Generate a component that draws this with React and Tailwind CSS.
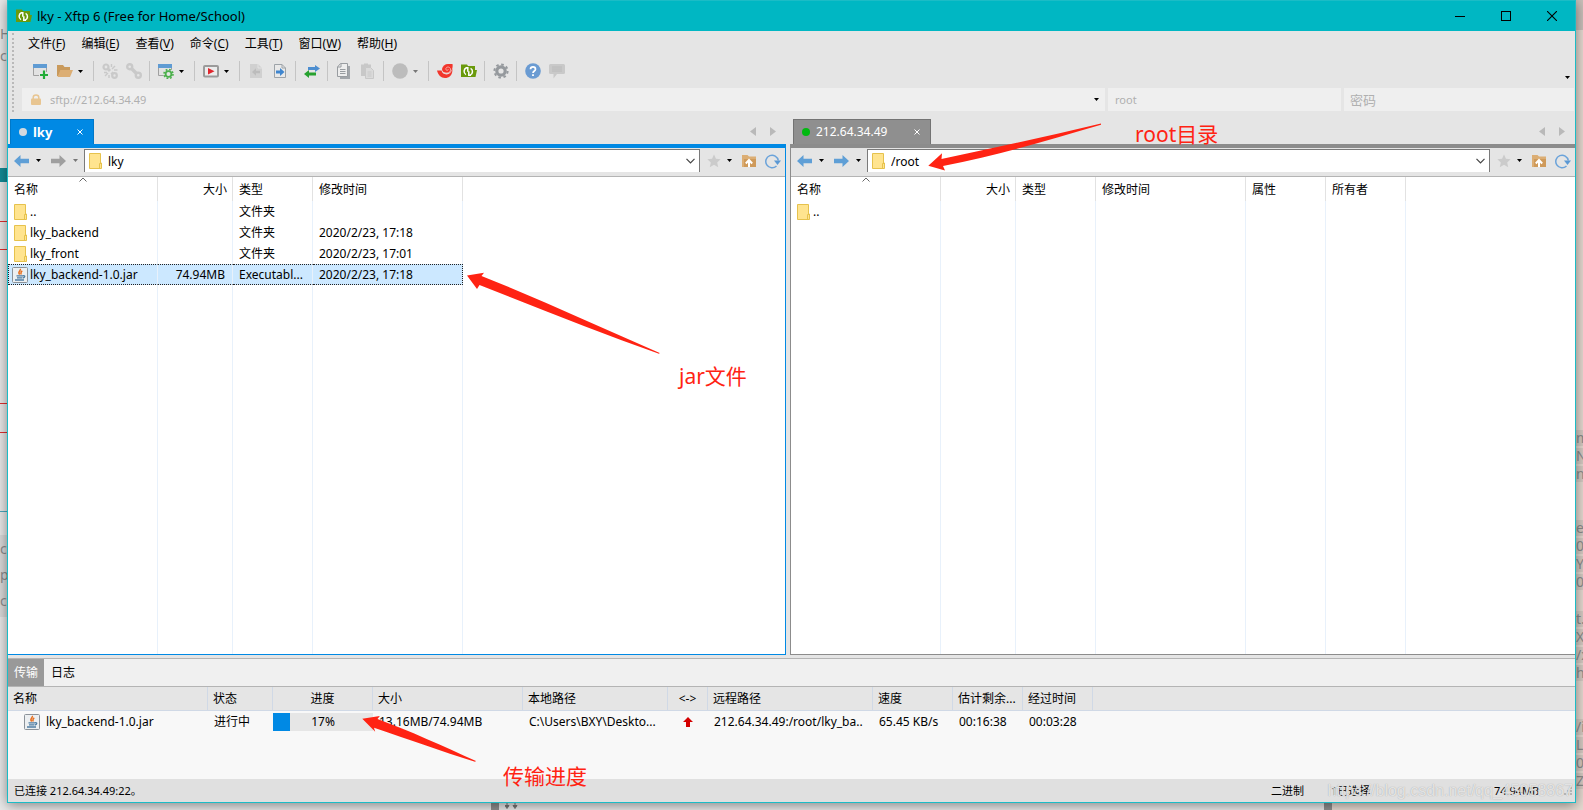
import React from 'react';
import clsx from 'clsx';

const MENUS = [
  ['文件', 'F'],
  ['编辑', 'E'],
  ['查看', 'V'],
  ['命令', 'C'],
  ['工具', 'T'],
  ['窗口', 'W'],
  ['帮助', 'H'],
];

const LOCAL_COLUMNS = [
  { key: 'name', label: '名称', width: 'w-[150px]' },
  { key: 'size', label: '大小', width: 'w-[75px]', right: true },
  { key: 'type', label: '类型', width: 'w-[80px]' },
  { key: 'time', label: '修改时间', width: 'w-[150px]' },
];

const REMOTE_COLUMNS = [
  ...LOCAL_COLUMNS,
  { key: 'attr', label: '属性', width: 'w-[80px]' },
  { key: 'owner', label: '所有者', width: 'w-[80px]' },
];

const LOCAL_FILES = [
  { name: '..', type: '文件夹' },
  { name: 'lky_backend', type: '文件夹', time: '2020/2/23, 17:18' },
  { name: 'lky_front', type: '文件夹', time: '2020/2/23, 17:01' },
  {
    name: 'lky_backend-1.0.jar',
    size: '74.94MB',
    type: 'Executabl...',
    time: '2020/2/23, 17:18',
    jar: true,
    selected: true,
  },
];

const REMOTE_FILES = [{ name: '..' }];

const TRANSFER_COLUMNS = [
  { label: '名称', width: 'w-[200px]' },
  { label: '状态', width: 'w-[65px]' },
  { label: '进度', width: 'w-[100px]', center: true },
  { label: '大小', width: 'w-[150px]' },
  { label: '本地路径', width: 'w-[145px]' },
  { label: '<->', width: 'w-[40px]', center: true },
  { label: '远程路径', width: 'w-[165px]' },
  { label: '速度', width: 'w-[80px]' },
  { label: '估计剩余...', width: 'w-[70px]' },
  { label: '经过时间', width: 'w-[70px]' },
];

/* ---------- icons ---------- */

const Icon = ({ children, className }) => (
  <svg viewBox="0 0 16 16" className={clsx('h-4 w-4 shrink-0', className)} aria-hidden="true">
    {children}
  </svg>
);

const Caret = ({ className }) => (
  <svg viewBox="0 0 5 3" className={clsx('h-[3px] w-[5px] shrink-0', className)} aria-hidden="true">
    <path d="M0 0h5L2.5 3z" fill="currentColor" />
  </svg>
);

const XftpIcon = () => (
  <Icon>
    <path d="M0 1.5h6L7 3h7v4h2l-1.5 7H0z" fill="#6a9a0c" />
    <g stroke="#fff" strokeWidth="1.5" fill="none">
      <path d="M5.5 4.8C2.4 6 2.4 10.200 5 11.600M4.500 4.700h2.300v4" />
      <path d="M9 12.300C12.200 11 12.200 6.800 9.600 5.400M10 12.300H7.800v-4" />
    </g>
  </Icon>
);

const NewSessionIcon = () => (
  <Icon>
    <path d="M.5 2.5h13v10H.5z" fill="#e2e2e2" stroke="#a0a0a0" />
    <path d="M0 1h14v4H0z" fill="#5f9bd3" />
    <path d="M6 9h9v5H6z" fill="#e5e5e5" />
    <path d="M11 7.5v8.500M7 12h8" stroke="#22ac38" strokeWidth="2.2" />
  </Icon>
);

const OpenIcon = () => (
  <Icon>
    <path d="M0 2h6l1.500 2H13v3H4l-2.500 6H0z" fill="#c99a5c" />
    <path d="M3.500 7H16l-3 7H.5z" fill="#dcae74" />
  </Icon>
);

const DisconnectIcon = () => (
  <Icon>
    <g fill="none" stroke="#c9c9c9" strokeWidth="2.2">
      <circle cx="4" cy="4" r="2.500" />
      <circle cx="12.500" cy="12.500" r="2.300" />
      <path d="M6.300 6.300L8 8M9.500 9.500l1.500 1.500" strokeWidth="3" />
      <path d="M10 6l3-3M9.500 4V1M12 7h3.500M6 10l-3 3M2 9.500h3M7 12v3" strokeWidth="1.400" />
    </g>
  </Icon>
);

const ConnectIcon = () => (
  <Icon>
    <g fill="none" stroke="#c9c9c9" strokeWidth="2.4">
      <circle cx="3.700" cy="3.700" r="2.500" />
      <circle cx="12.300" cy="12.300" r="2.500" />
      <path d="M5.500 5.500l5 5" strokeWidth="3.400" />
    </g>
  </Icon>
);

const PropertiesIcon = () => (
  <Icon>
    <path d="M.5 2.500h13v10H.5z" fill="#e2e2e2" stroke="#a0a0a0" />
    <path d="M0 1h14v4H0z" fill="#5f9bd3" />
    <circle cx="10.500" cy="11" r="5.200" fill="#e5e5e5" />
    <circle cx="10.500" cy="11" r="2.900" fill="none" stroke="#4cb04c" strokeWidth="1.800" />
    <circle cx="10.500" cy="11" r="4.500" fill="none" stroke="#4cb04c" strokeWidth="1.600" strokeDasharray="1.77 1.77" />
  </Icon>
);

const RunIcon = () => (
  <Icon>
    <rect x="1" y="3" width="14" height="10.500" rx="1" fill="#ececec" stroke="#9b9b9b" strokeWidth="2" />
    <path d="M5 5l6.500 3.200L5 11.500z" fill="#e0262d" />
  </Icon>
);

const PageBackIcon = () => (
  <Icon>
    <path d="M2 1h8l4 4v10H2z" fill="#d0d0d0" />
    <path d="M10 1v4h4" stroke="#e2e2e2" fill="none" />
    <path d="M4 9l4-3.700v2.400h4v2.600H8v2.400z" fill="#bcbcbc" />
  </Icon>
);

const PageForwardIcon = () => (
  <Icon>
    <path d="M2.500 1.500H10L13.500 5v9.500h-11z" fill="#e9e9e9" stroke="#9da3a8" />
    <path d="M10 1.500V5h3.500" stroke="#9da3a8" fill="none" />
    <path d="M12.500 9L8 5v2.500H4v3h4V13z" fill="#3f86cf" />
  </Icon>
);

const SyncIcon = () => (
  <Icon>
    <path d="M16 5.500L11 2v2H4v3h7v2z" fill="#4d8ed0" />
    <path d="M0 11l5-4v2.500h7v3H5V15z" fill="#27a12f" />
  </Icon>
);

const CopyIcon = () => (
  <Icon>
    <path d="M4 3h10v13H4z" fill="#a2a6aa" />
    <path d="M4.500.5H11.500v13h-10V4z" fill="#ededed" stroke="#989ca0" />
    <path d="M5 .5V4H1.500M4 6.500h5.500M4 8.500h5.500M4 10.500h5.500" stroke="#989ca0" fill="none" />
  </Icon>
);

const PasteIcon = () => (
  <Icon>
    <path d="M1 1.500h3V.5h4v1h3V13H1z" fill="#c8c8c8" />
    <path d="M5.500 4.500h5l3 3v8h-8z" fill="#dadada" stroke="#c8c8c8" />
    <path d="M7.500 9h4M7.500 11h4M7.500 13h4" stroke="#c8c8c8" />
  </Icon>
);

const StopIcon = () => (
  <Icon>
    <circle cx="8" cy="8" r="7.800" fill="#bcbcbc" />
  </Icon>
);

const XshellIcon = () => (
  <Icon>
    <path d="M0 7.500h4.500c.8 3.500 4.500 4.800 7.500 3.200 2-1 3-3 3.200-5.200C16.300 11 12.500 15 8 15c-4 0-7-3-8-7.500z" fill="#f2362c" />
    <path d="M5 6C5.500 3 8 1 11 1h4.500c.8 5.500-2 9-5.500 9C7 10 5 8.500 5 6z" fill="#f2362c" />
    <path d="M7 9.500c3.500 1.500 7-.5 6.500-3.500C13 3.300 8.800 3.500 8.800 6c0 1.700 2.500 1.700 2.500.3" stroke="#f7b0aa" strokeWidth=".9" fill="none" />
  </Icon>
);

const GearIcon = () => (
  <Icon>
    <circle cx="8" cy="8" r="4.200" fill="none" stroke="#95999d" strokeWidth="3.200" />
    <circle cx="8" cy="8" r="6.600" fill="none" stroke="#95999d" strokeWidth="2" strokeDasharray="2.59 2.59" />
  </Icon>
);

const HelpIcon = () => (
  <Icon>
    <circle cx="8" cy="8" r="7.800" fill="#6a9bd2" />
    <path d="M5.500 6.300c0-3.300 5-3.300 5 0C10.500 8 8 8 8 10" stroke="#fff" strokeWidth="1.700" fill="none" />
    <path d="M7.100 11.200h1.800V13H7.100z" fill="#fff" />
  </Icon>
);

const ChatIcon = () => (
  <Icon>
    <path d="M1.500 1h13Q16 1 16 2.500v7q0 1.500-1.500 1.500H8l-3.500 4.500V11h-3Q0 11 0 9.500v-7Q0 1 1.500 1z" fill="#c9c9c9" />
    <path d="M3 4h10M3 6h10M3 8h10" stroke="#bababa" />
  </Icon>
);

const LockIcon = () => (
  <svg viewBox="0 0 10 11" className="h-[11px] w-[10px] shrink-0" aria-hidden="true">
    <path d="M2.200 5V3.500c0-3.200 5.600-3.200 5.600 0V5" stroke="#e8c591" strokeWidth="1.500" fill="none" />
    <rect y="4.500" width="10" height="6.500" rx="1" fill="#e8c591" />
  </svg>
);

const ArrowIcon = ({ forward, color }) => (
  <svg viewBox="0 0 15 12" className="h-3 w-[15px]" aria-hidden="true">
    <path
      d={forward ? 'M15 6L8.500 0v3.700H0v4.600h8.500V12z' : 'M0 6l6.500-6v3.700H15v4.600H6.500V12z'}
      fill={color}
    />
  </svg>
);

const StarIcon = () => (
  <Icon>
    <path d="M8 1.500l2 4.300 4.700.5-3.500 3.200 1 4.700L8 11.800l-4.200 2.400 1-4.700L1.300 6.300 6 5.800z" fill="#cbcbcb" />
  </Icon>
);

const UpFolderIcon = () => (
  <Icon>
    <path d="M1 2h5.500L8 3.500h7V14H1z" fill="#dcae74" />
    <path d="M3 6h12v8H3z" fill="#cf9a5a" />
    <path d="M8 14V8.500M4.800 10.500L8 7l3.200 3.500" stroke="#fff" strokeWidth="2" fill="none" />
  </Icon>
);

const RefreshIcon = () => (
  <Icon>
    <path d="M11.500 13A6.300 6.300 0 1 1 13.300 7.500" stroke="#6ba3da" strokeWidth="1.500" fill="none" />
    <path d="M9 7.500h7L12.500 12z" fill="#5a98d4" />
  </Icon>
);

const FolderIcon = () => (
  <svg viewBox="0 0 13 16" className="h-4 w-[13px] shrink-0" aria-hidden="true">
    <path d="M.5.5h11v9.500h1v5.500H.5z" fill="#ffe48f" stroke="#e6c24d" />
    <path d="M10.500 15.500v-5h2" stroke="#e6c24d" fill="none" />
  </svg>
);

const JarIcon = () => (
  <Icon>
    <rect x=".5" y=".5" width="15" height="15" rx="1" fill="#eceff1" stroke="#8b9299" />
    <path d="M8.300 1.800c1 2-3.300 2.800-.6 5.700M10.300 4C8 5 9.500 6 8.800 7.500" stroke="#e76f1f" strokeWidth="1.500" fill="none" />
    <path d="M4.500 8.800h6.500M5 10.800h5.500M3 13h9M11 8.800c2.500-.5 2.200 1.800 0 2.200" stroke="#4f7ea3" strokeWidth="1.300" fill="none" />
  </Icon>
);

/* ---------- toolbar ---------- */

const TOOLS = [
  { label: '新建', icon: NewSessionIcon },
  { label: '打开', icon: OpenIcon, menu: true },
  'sep',
  { label: '断开', icon: DisconnectIcon },
  { label: '重新连接', icon: ConnectIcon },
  'sep',
  { label: '属性', icon: PropertiesIcon, menu: true },
  'sep',
  { label: '运行', icon: RunIcon, menu: true },
  'sep',
  { label: '传输到左侧', icon: PageBackIcon },
  { label: '传输到右侧', icon: PageForwardIcon },
  'sep',
  { label: '同步', icon: SyncIcon },
  'sep',
  { label: '复制', icon: CopyIcon },
  { label: '粘贴', icon: PasteIcon },
  'sep',
  { label: '停止', icon: StopIcon, menu: true, disabled: true },
  'sep',
  { label: 'Xshell', icon: XshellIcon },
  { label: 'Xftp', icon: XftpIcon },
  'sep',
  { label: '选项', icon: GearIcon },
  'sep',
  { label: '帮助', icon: HelpIcon },
  { label: '反馈', icon: ChatIcon },
];

const Toolbar = () => (
  <div className="flex h-7 items-center pl-[21px]">
    {TOOLS.map((tool, i) => {
      if (tool === 'sep') {
        return (
          <span key={i} className="flex w-2 shrink-0 pl-[3px]">
            <span className="h-5 w-px bg-[#c4c4c4]" />
          </span>
        );
      }
      const ToolIcon = tool.icon;
      return (
        <button
          key={i}
          type="button"
          aria-label={tool.label}
          className={clsx('flex h-6 shrink-0 items-center pl-1', tool.menu ? 'w-[37px] gap-[5px]' : 'w-6')}
        >
          <ToolIcon />
          {tool.menu && <Caret className={tool.disabled ? 'text-[#777777]' : 'text-black'} />}
        </button>
      );
    })}
    <button type="button" aria-label="更多" className="mr-[5px] ml-auto self-end pb-[6px]">
      <Caret />
    </button>
  </div>
);

/* ---------- title, menu, address ---------- */

const TitleBar = () => (
  <header className="flex h-[30px] shrink-0 items-center bg-[#00b7c3] pl-2">
    <XftpIcon />
    <h1 className="pl-[5px] text-[13px]">lky - Xftp 6 (Free for Home/School)</h1>
    <div className="ml-auto flex h-full">
      <button type="button" aria-label="最小化" className="flex w-[46px] items-center justify-center">
        <span className="h-px w-[10px] bg-black" />
      </button>
      <button type="button" aria-label="最大化" className="flex w-[46px] items-center justify-center">
        <span className="h-[10px] w-[10px] border border-black" />
      </button>
      <button type="button" aria-label="关闭" className="flex w-[46px] items-center justify-center">
        <svg viewBox="0 0 10 10" className="h-[10px] w-[10px]" aria-hidden="true">
          <path d="M0 0l10 10M10 0L0 10" stroke="#000" strokeWidth="1.100" />
        </svg>
      </button>
    </div>
  </header>
);

const MenuBar = () => (
  <nav className="flex h-[26px] items-center gap-4 pl-[20px]">
    {MENUS.map(([label, key]) => (
      <button key={key} type="button" className="whitespace-nowrap">
        {label}(<span className="underline underline-offset-2">{key}</span>)
      </button>
    ))}
  </nav>
);

const AddressBar = () => (
  <div className="flex gap-[3px] py-[3px] pr-px pl-[14px] text-[#b0b0b0]">
    <div className="flex h-[23px] flex-1 items-center bg-[#efefef] pr-[6px] pl-[9px]">
      <LockIcon />
      <input
        aria-label="地址"
        defaultValue="sftp://212.64.34.49"
        className="min-w-0 flex-1 bg-transparent pt-px pl-[9px] text-[11px] outline-none"
      />
      <button type="button" aria-label="地址列表" className="text-black">
        <Caret />
      </button>
    </div>
    <input
      aria-label="用户名"
      placeholder="root"
      className="h-[23px] w-[233px] bg-[#efefef] px-[7px] text-[11px] outline-none placeholder:text-[#b0b0b0]"
    />
    <input
      aria-label="密码"
      type="password"
      placeholder="密码"
      className="h-[23px] w-[230px] bg-[#efefef] px-[6px] text-[13px] outline-none placeholder:text-[#b0b0b0]"
    />
  </div>
);

/* ---------- file panes ---------- */

const TabStrip = ({ title, active }) => (
  <div
    className={clsx(
      'flex h-[34px] shrink-0 items-end border-b-4',
      active ? 'border-[#0089e4] pl-[2px]' : 'border-[#8c8c8c] pl-[3px]'
    )}
  >
    <div
      className={clsx(
        'flex h-[25px] items-center border border-b-0 pr-[10px] pl-2 text-white',
        active ? 'w-[84px] border-[#0078c8] bg-[#0089e4]' : 'w-[138px] border-[#737373] bg-[#8f8f8f]'
      )}
    >
      <span className={clsx('h-2 w-2 rounded-full', active ? 'bg-[#d2d9df]' : 'bg-[#00b90f]')} />
      <span className={clsx('pl-[6px]', active && 'text-[13px] font-bold')}>{title}</span>
      <button type="button" aria-label="关闭标签" className="ml-auto">
        <svg viewBox="0 0 6 6" className="h-[6px] w-[6px]" aria-hidden="true">
          <path d="M.5.5l5 5M5.500.5l-5 5" stroke="#fff" />
        </svg>
      </button>
    </div>
    <div className="mr-[10px] mb-2 ml-auto flex gap-[14px] text-[#b9b9b9]">
      <button type="button" aria-label="上一个标签">
        <svg viewBox="0 0 6 9" className="h-[9px] w-[6px]" aria-hidden="true">
          <path d="M6 0v9L0 4.500z" fill="currentColor" />
        </svg>
      </button>
      <button type="button" aria-label="下一个标签">
        <svg viewBox="0 0 6 9" className="h-[9px] w-[6px]" aria-hidden="true">
          <path d="M0 0v9l6-4.500z" fill="currentColor" />
        </svg>
      </button>
    </div>
  </div>
);

const PathBar = ({ path, canForward }) => (
  <div className="flex h-[29px] shrink-0 items-center border-b border-[#b4b4b4] bg-[#e5e5e5] pt-px pr-[4px] pb-1 pl-[6px]">
    <button type="button" aria-label="后退" className="flex w-[37px] items-center gap-[7px]">
      <ArrowIcon color="#5f9fd6" />
      <Caret />
    </button>
    <button type="button" aria-label="前进" className="flex w-[33px] items-center gap-[7px]">
      <ArrowIcon forward color={canForward ? '#5f9fd6' : '#9f9f9f'} />
      <Caret className={canForward ? 'text-black' : 'text-[#777777]'} />
    </button>
    <div className="flex h-[23px] min-w-0 flex-1 items-center border border-b-0 border-[#7a7a7a] bg-white pr-1 pl-1">
      <FolderIcon />
      <input aria-label="路径" defaultValue={path} className="min-w-0 flex-1 bg-transparent pt-[2px] pl-[6px] outline-none" />
      <button type="button" aria-label="路径列表">
        <svg viewBox="0 0 9 6" className="h-[6px] w-[9px]" aria-hidden="true">
          <path d="M.5.800l4 4 4-4" stroke="#444" strokeWidth="1.200" fill="none" />
        </svg>
      </button>
    </div>
    <button type="button" aria-label="书签" className="ml-[6px] flex w-[35px] items-center gap-[5px]">
      <StarIcon />
      <Caret />
    </button>
    <button type="button" aria-label="上级目录" className="w-6">
      <UpFolderIcon />
    </button>
    <button type="button" aria-label="刷新">
      <RefreshIcon />
    </button>
  </div>
);

const FileTable = ({ columns, files }) => (
  <table className="h-full w-full table-fixed border-separate border-spacing-0">
    <thead>
      <tr className="h-6">
        {columns.map((col, i) => (
          <th
            key={col.key}
            className={clsx(
              'relative border-r border-[#e2e2e2] pt-px pr-[5px] pb-0 pl-[6px] font-normal',
              col.width,
              col.right ? 'text-right' : 'text-left'
            )}
          >
            {col.label}
            {i === 0 && (
              <svg viewBox="0 0 8 5" className="absolute top-0 left-1/2 h-[5px] w-2 -translate-x-1/2" aria-hidden="true">
                <path d="M.5 4.500L4 1l3.500 3.500" stroke="#666" fill="none" />
              </svg>
            )}
          </th>
        ))}
        <td />
      </tr>
    </thead>
    <tbody>
      {files.map((file) => (
        <tr key={file.name} className="h-[21px]">
          {columns.map((col, i) => (
            <td
              key={col.key}
              className={clsx(
                'border-r border-[#e8f1fb] p-0 whitespace-nowrap',
                file.selected && 'border-y border-y-[#222222] bg-[#cce8ff] [border-bottom-style:dotted] [border-top-style:dotted]',
                file.selected && i === 0 && 'border-l border-l-[#222222] [border-left-style:dotted]',
                file.selected && i === columns.length - 1 && 'border-r-[#222222] [border-right-style:dotted]',
                col.right ? 'pr-[7px] text-right' : i > 0 && 'pl-[6px]'
              )}
            >
              {i === 0 ? (
                <span className={clsx('flex items-center', file.jar ? 'gap-[2px] pl-[3px]' : 'gap-[3px] pl-[6px]')}>
                  {file.jar ? <JarIcon /> : <FolderIcon />}
                  {file.name}
                </span>
              ) : (
                file[col.key]
              )}
            </td>
          ))}
          <td />
        </tr>
      ))}
      {/* filler row carries the column guides down */}
      <tr>
        {columns.map((col) => (
          <td key={col.key} className="border-r border-[#e8f1fb]" />
        ))}
        <td />
      </tr>
    </tbody>
  </table>
);

const FilePane = ({ title, path, active, columns, files }) => (
  <section className="flex min-w-0 flex-col">
    <TabStrip title={title} active={active} />
    <div
      className={clsx(
        'flex min-h-0 flex-1 flex-col border-b bg-white',
        active ? 'border-r border-[#0089e4]' : 'border-l border-[#8c8c8c]'
      )}
    >
      <PathBar path={path} canForward={!active} />
      <div className="min-h-0 flex-1">
        <FileTable columns={columns} files={files} />
      </div>
    </div>
  </section>
);

/* ---------- transfers ---------- */

const TransferPanel = ({ progress }) => (
  <section className="shrink-0 border-t border-[#b4b4b4]">
    <div className="flex h-7 border-b border-[#b4b4b4] bg-[#f0f0f0]">
      <button type="button" className="bg-[#999999] px-[6px] text-white">
        传输
      </button>
      <button type="button" className="px-[7px]">
        日志
      </button>
    </div>
    <div className="h-[92px] bg-[#f8f8f8]">
      <table className="w-full table-fixed border-separate border-spacing-0">
        <thead>
          <tr className="h-6 bg-[#e5e5e5]">
            {TRANSFER_COLUMNS.map((col) => (
              <th
                key={col.label}
                className={clsx(
                  'border-r border-b border-[#d0d9e6] px-[5px] font-normal whitespace-nowrap',
                  col.width,
                  col.center ? 'text-center' : 'text-left'
                )}
              >
                {col.label}
              </th>
            ))}
            <td className="border-b border-[#d0d9e6]" />
          </tr>
        </thead>
        <tbody>
          <tr className="h-[22px]">
            <td className="p-0 pl-4">
              <span className="flex items-center gap-[6px]">
                <JarIcon />
                lky_backend-1.0.jar
              </span>
            </td>
            <td className="p-0 pl-[6px]">进行中</td>
            <td className="p-0">
              <div className="relative h-[18px] bg-[#e6e6e6] text-center leading-[18px]">
                <div className="absolute inset-y-0 left-0 bg-[#0089e4]" style={{ width: `${progress}%` }} />
                {progress}%
              </div>
            </td>
            <td className="p-0 pl-[6px]">13.16MB/74.94MB</td>
            <td className="p-0 pl-[6px] whitespace-nowrap">C:\Users\BXY\Deskto...</td>
            <td className="p-0">
              <svg viewBox="0 0 10 10" className="mx-auto h-[10px] w-[10px]" aria-label="上传">
                <path d="M5 0l5 5H7v5H3V5H0z" fill="#d40000" />
              </svg>
            </td>
            <td className="p-0 pl-[6px] whitespace-nowrap">212.64.34.49:/root/lky_ba..</td>
            <td className="p-0 pl-[6px] whitespace-nowrap">65.45 KB/s</td>
            <td className="p-0 pl-[6px]">00:16:38</td>
            <td className="p-0 pl-[6px]">00:03:28</td>
            <td />
          </tr>
        </tbody>
      </table>
    </div>
  </section>
);

const StatusBar = () => (
  <footer className="flex h-[23px] shrink-0 items-center bg-[#e0e0e0] pl-[6px] text-[11px]">
    <span className="flex-1">已连接 212.64.34.49:22。</span>
    <span className="w-[60px]">二进制</span>
    <span className="w-[163px]">1已选择</span>
    <span className="w-[70px]">74.94MB</span>
    <svg viewBox="0 0 8 8" className="mr-[3px] h-2 w-2" aria-hidden="true">
      <path d="M6 0h2v2H6zM3 3h2v2H3zM6 3h2v2H6zM0 6h2v2H0zM3 6h2v2H3zM6 6h2v2H6z" fill="#b5b5b5" />
    </svg>
  </footer>
);

/* ---------- what lies behind and over the window ---------- */

const LEFT_SCRAPS = [
  ['H', 'top-[26px]'],
  ['cc', 'top-[48px]'],
  ['c', 'top-[541px]'],
  ['p', 'top-[567px]'],
  ['cc', 'top-[593px]'],
];

const RIGHT_SCRAPS = [
  ['m', 'top-[430px]'],
  ['N', 'top-[448px]'],
  ['n.', 'top-[466px]'],
  ['e', 'top-[520px]'],
  ['0Y', 'top-[538px]'],
  ['Y', 'top-[556px]'],
  ['0', 'top-[574px]'],
  ['t.', 'top-[611px]'],
  ['X', 'top-[629px]'],
  ['/x', 'top-[647px]'],
  ['ht', 'top-[665px]'],
  ['/i', 'top-[719px]'],
  ['L', 'top-[737px]'],
  ['0', 'top-[755px]'],
  ['Z', 'top-[773px]'],
];

const Backdrop = () => (
  <div className="absolute inset-0 overflow-hidden bg-[#e9e9e9] text-[16px] leading-4 text-[#8d8d8d]" aria-hidden="true">
    <div className="absolute inset-y-0 right-0 w-[251px] bg-[#e6dad1]" />
    <div className="absolute top-0 right-0 h-[30px] w-2 bg-[#c9c0ba]" />
    <div className="absolute bottom-0 left-[491px] h-2 w-2 bg-[#8f8f8f]" />
    <div className="absolute right-[251px] bottom-0 h-2 w-2 bg-[#8f8f8f]" />
    <svg viewBox="0 0 13 6" className="absolute bottom-px left-[505px] h-[6px] w-[13px]">
      <path d="M2 0v4M0 2.500h4L2 5.500zM10 0v4M8 2.500h4L10 5.500z" fill="#777" stroke="#777" />
    </svg>
    <div className="absolute top-[168px] left-0 h-[14px] w-2 bg-[#138c96]" />
    {['top-[221px]', 'top-[249px]', 'top-[403px]', 'top-[432px]'].map((top) => (
      <div key={top} className={clsx('absolute left-0 h-px w-2 bg-[#e03030]', top)} />
    ))}
    <div className="absolute top-[511px] left-0 h-px w-2 bg-[#4aa9bd]" />
    <div className="absolute top-[535px] left-0 h-[82px] w-2 bg-[#dadada]" />
    {LEFT_SCRAPS.map(([text, top]) => (
      <span key={top} className={clsx('absolute left-0 w-[7px] overflow-hidden text-[14px]', top)}>
        {text}
      </span>
    ))}
    {RIGHT_SCRAPS.map(([text, top]) => (
      <span key={top} className={clsx('absolute right-0 w-[7px] overflow-hidden bg-[#d6cbc3] text-[14px]', top)}>
        {text}
      </span>
    ))}
  </div>
);

const Annotations = () => (
  <>
    <svg className="pointer-events-none absolute top-0 left-0 h-full w-full" fill="#ff2313" aria-hidden="true">
      <path d="M467 275.500L484 272.700L481.500 276C540 299 600 327 659.700 353L659 353.700C600 333 540 309 479.500 285L477 289z" />
      <path d="M928.300 165.700L942 153.300L941.500 159C995 148 1048 136 1101 123.500L1101 124.700C1048 140 1000 155 943 166L945 170.500z" />
      <path d="M362.300 718.700L379.800 716L377.500 719C410 731 443 746 476 761L475 761.700C441 751 410 740 374 727.700L375.200 731.700z" />
    </svg>
    <p className="absolute top-[364px] left-[679px] text-[21px] leading-6 text-[#ff2313]">jar文件</p>
    <p className="absolute top-[122px] left-[1135px] text-[21px] leading-6 text-[#ff2313]">root目录</p>
    <p className="absolute top-[764px] left-[503px] text-[21px] leading-6 text-[#ff2313]">传输进度</p>
    <p className="absolute right-[10px] bottom-[9px] font-['Liberation_Sans',sans-serif] text-[16px] leading-5 text-white/70 [text-shadow:0_0_1px_#999999]">
      https://blog.csdn.net/qq_45058867
    </p>
  </>
);

export default function App() {
  return (
    <div className="relative h-screen min-h-[480px] overflow-hidden px-[7px] pb-[7px] font-['Noto_Sans','Noto_Sans_CJK_SC',sans-serif] text-[12px] leading-4 text-black">
      <Backdrop />
      <main className="relative flex h-full flex-col border border-[#1bbcc6] bg-[#e5e5e5] shadow-[0_2px_12px_rgba(0,0,0,0.45)]">
        <TitleBar />
        <div className="relative shrink-0">
          <div className="absolute inset-y-[2px] left-1 w-0 border-l-2 border-dotted border-[#b9b9b9]" />
          <MenuBar />
          <Toolbar />
          <AddressBar />
        </div>
        <div className="grid min-h-0 flex-1 grid-cols-[778fr_785fr] gap-1 pb-[3px]">
          <FilePane active title="lky" path="lky" columns={LOCAL_COLUMNS} files={LOCAL_FILES} />
          <FilePane title="212.64.34.49" path="/root" columns={REMOTE_COLUMNS} files={REMOTE_FILES} />
        </div>
        <TransferPanel progress={17} />
        <StatusBar />
      </main>
      <Annotations />
    </div>
  );
}
